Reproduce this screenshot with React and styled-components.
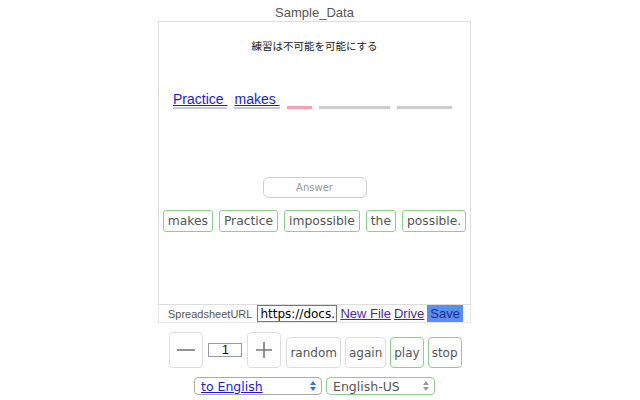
import styled, {createGlobalStyle} from "styled-components";

const GlobalStyle = createGlobalStyle`
    html, body {
        margin: 0;
        padding: 0;
        background: #fff;
        font-family: "Liberation Sans", Arial, sans-serif;
    }
`;

const Page = styled.div`
    width: 629px;
    display: flex;
    flex-direction: column;
    align-items: center;
`;

const Title = styled.div`
    font-size: 13px;
    color: #555;
    line-height: 15px;
    margin-top: 5px;
    height: 16px;
`;

const Card = styled.div`
    box-sizing: border-box;
    width: 313px;
    height: 284px;
    border: 1px solid #ddd;
    display: flex;
    flex-direction: column;
    align-items: center;
`;

const Sentence = styled.div`
    margin-top: 17px;
    font-family: "Noto Sans CJK JP", sans-serif;
    font-size: 10.5px;
    line-height: 14px;
    color: #222;
`;

const WordRow = styled.div`
    align-self: flex-start;
    margin: 38px 0 0 14px;
    display: flex;
    align-items: flex-end;
    gap: 7px;
`;

const Word = styled.a`
    font-size: 14px;
    line-height: 16px;
    color: #1a1add;
    text-decoration: underline;
    white-space: pre;
    border-bottom: 2px solid #c9c9d6;
`;

const Blank = styled.span`
    display: inline-block;
    width: ${p => p.$w}px;
    height: 3px;
    background: ${p => (p.$active ? "#f5a3b3" : "#cdcdcd")};
`;

const AnswerBox = styled.div`
    box-sizing: border-box;
    margin-top: 68px;
    width: 104px;
    height: 21px;
    border: 1px solid #ccc;
    border-radius: 6px;
    display: flex;
    align-items: center;
    justify-content: center;
    font-family: "DejaVu Sans", sans-serif;
    font-size: 10px;
    color: #999;
`;

const Chips = styled.div`
    margin-top: 12px;
    display: flex;
    gap: 6px;
`;

const Chip = styled.div`
    border: 1px solid #8bd08b;
    border-radius: 3px;
    padding: 2px 4px;
    font-family: "DejaVu Sans", sans-serif;
    font-size: 12.3px;
    line-height: 16px;
    color: #555;
`;

const UrlBar = styled.div`
    box-sizing: border-box;
    width: 313px;
    height: 18px;
    border: 1px solid #e6e6e6;
    border-top: none;
    display: flex;
    align-items: center;
    padding-left: 9px;
    gap: 3px;
`;

const Label = styled.span`
    font-size: 11px;
    color: #555;
    margin-right: 2px;
`;

const UrlInput = styled.input`
    box-sizing: border-box;
    width: 80px;
    height: 17px;
    border: 1px solid #777;
    padding: 0 2px;
    font-family: "DejaVu Sans", sans-serif;
    font-size: 12px;
    color: #000;
    outline: none;
`;

const LinkText = styled.a`
    font-size: 13px;
    color: #4a2a9a;
    text-decoration: underline;
`;

const SaveButton = styled.div`
    height: 17px;
    padding: 0 3px;
    background: #5a8ef0;
    color: #1a2d8e;
    font-size: 13px;
    line-height: 17px;
`;

const Controls = styled.div`
    margin-top: 9px;
    margin-left: 2px;
    display: flex;
    align-items: flex-end;
    gap: 4px;
`;

const StepButton = styled.div`
    box-sizing: border-box;
    width: 34px;
    height: 36px;
    border: 1px solid #ddd;
    border-radius: 4px;
    display: flex;
    align-items: center;
    justify-content: center;
    margin-right: 1px;
`;

const CountInput = styled.div`
    box-sizing: border-box;
    width: 34px;
    height: 14px;
    margin-bottom: 11px;
    margin-right: 1px;
    border: 1px solid #999;
    font-size: 13px;
    line-height: 12px;
    text-align: center;
    color: #111;
`;

const TextButton = styled.div`
    box-sizing: border-box;
    height: 31px;
    padding: 0 3px;
    border: 1px solid ${p => (p.$green ? "#8bd08b" : "#ddd")};
    border-radius: 4px;
    display: flex;
    align-items: center;
    font-family: "DejaVu Sans", sans-serif;
    font-size: 12px;
    color: #555;
`;

const Selects = styled.div`
    margin-top: 9px;
    display: flex;
    gap: 4px;
`;

const Select = styled.div`
    box-sizing: border-box;
    width: ${p => p.$w}px;
    height: 18px;
    border: 1px solid ${p => (p.$green ? "#8bd08b" : "#aaa")};
    border-radius: 4px;
    display: flex;
    align-items: center;
    justify-content: space-between;
    padding: 0 5px 0 6px;
    font-family: "DejaVu Sans", sans-serif;
    font-size: 12.5px;
    color: ${p => (p.$link ? "#1a1add" : "#555")};
    text-decoration: ${p => (p.$link ? "underline" : "none")};
`;

const Arrows = ({color}) => (
    <svg width="6" height="10" viewBox="0 0 6 10">
        <path d="M0 4 L3 0 L6 4 Z" fill={color} />
        <path d="M0 6 L3 10 L6 6 Z" fill={color} />
    </svg>
);

const Minus = () => (
    <svg width="20" height="20" viewBox="0 0 20 20">
        <path d="M1 10 H19" stroke="#777" strokeWidth="1.6" />
    </svg>
);

const Plus = () => (
    <svg width="18" height="18" viewBox="0 0 18 18">
        <path d="M1 9 H17 M9 1 V17" stroke="#777" strokeWidth="1.6" />
    </svg>
);

const App = () => {
    const chips = ["makes", "Practice", "impossible", "the", "possible."];
    return (
        <>
            <GlobalStyle />
            <Page>
                <Title>Sample_Data</Title>
                <Card>
                    <Sentence>練習は不可能を可能にする</Sentence>
                    <WordRow>
                        <Word>{"Practice "}</Word>
                        <Word>{"makes "}</Word>
                        <Blank $w={25} $active />
                        <Blank $w={71} />
                        <Blank $w={55} />
                    </WordRow>
                    <AnswerBox>Answer</AnswerBox>
                    <Chips>
                        {chips.map(c => (
                            <Chip key={c}>{c}</Chip>
                        ))}
                    </Chips>
                </Card>
                <UrlBar>
                    <Label>SpreadsheetURL</Label>
                    <UrlInput readOnly value="https://docs.google.com/spreadsheets" />
                    <LinkText>New File</LinkText>
                    <LinkText>Drive</LinkText>
                    <SaveButton>Save</SaveButton>
                </UrlBar>
                <Controls>
                    <StepButton>
                        <Minus />
                    </StepButton>
                    <CountInput>1</CountInput>
                    <StepButton>
                        <Plus />
                    </StepButton>
                    <TextButton>random</TextButton>
                    <TextButton>again</TextButton>
                    <TextButton $green>play</TextButton>
                    <TextButton $green>stop</TextButton>
                </Controls>
                <Selects>
                    <Select $w={128} $link>
                        to English
                        <Arrows color="#2f6fe0" />
                    </Select>
                    <Select $w={109} $green>
                        English-US
                        <Arrows color="#999" />
                    </Select>
                </Selects>
            </Page>
        </>
    );
};

export default App;
